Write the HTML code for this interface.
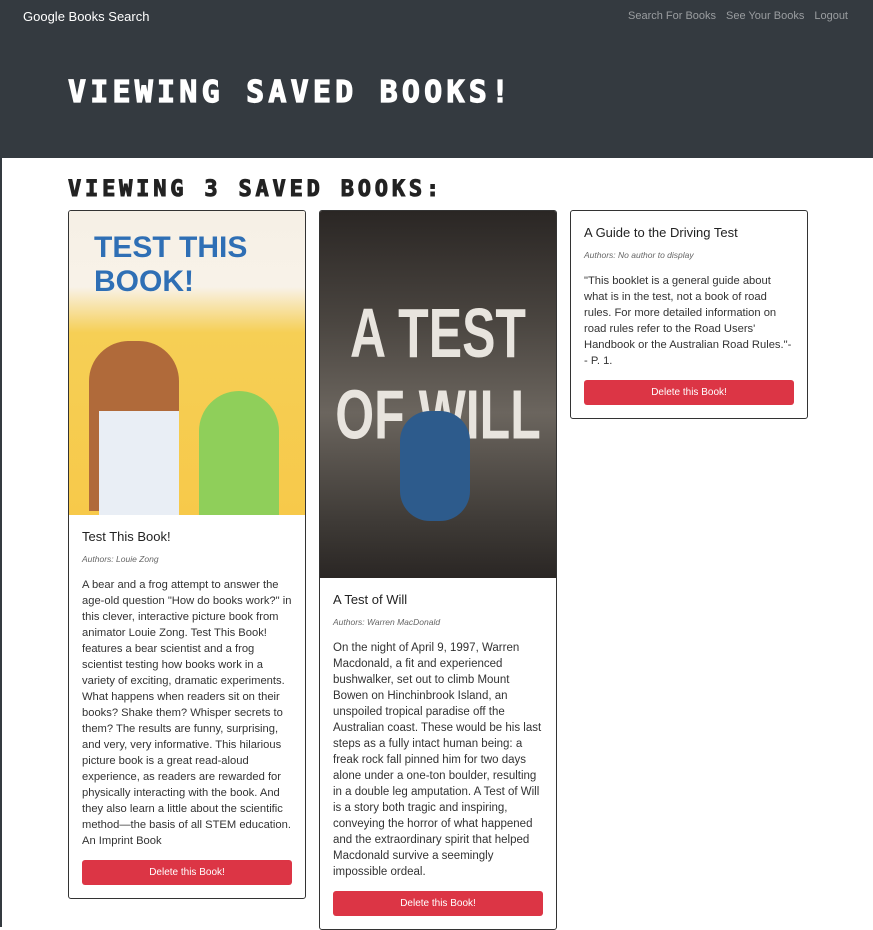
<!DOCTYPE html>
<html><head><style>
body{margin:0;width:873px;height:927px;overflow:hidden;font-family:"Liberation Sans",sans-serif;background:#fff;position:relative}
.lb{position:absolute;left:0;top:0;width:2px;height:927px;background:#343a40}
.hd{position:absolute;left:0;top:0;width:873px;height:158px;background:#343a40}
.brand{position:absolute;left:23px;top:9px;color:#fff;font-size:13px}
.nav{position:absolute;right:25px;top:10px;color:#9a9da0;font-size:11px}
.nav span{margin-left:10px}
h1{position:absolute;left:68px;top:75px;margin:0;color:#fff;font:bold 30px "DejaVu Sans Mono",monospace;letter-spacing:4.2px;-webkit-text-stroke:1.2px #fff}
h2{position:absolute;left:68px;top:177px;margin:0;color:#222;font:bold 22px "DejaVu Sans Mono",monospace;letter-spacing:3.8px;-webkit-text-stroke:1px #222}
.card{position:absolute;top:210px;width:236px;border:1px solid #333;border-radius:3px;background:#fff;overflow:hidden}
.img{width:236px}
.bd{padding:0 13px}
.t{font-size:13px;color:#222;margin:14px 0 10px}
.a{font-size:8.5px;font-style:italic;color:#666;margin-bottom:13px}
.p{font-size:11.2px;line-height:16px;color:#333}
.btn{background:#dc3545;color:#fff;font-size:10px;text-align:center;height:25px;line-height:25px;border-radius:3px;margin:11px 0 13px}
</style></head><body>
<div class="hd"></div><div class="lb"></div>
<div class="brand">Google Books Search</div>
<div class="nav"><span>Search For Books</span><span>See Your Books</span><span>Logout</span></div>
<h1>VIEWING SAVED BOOKS!</h1>
<h2>VIEWING 3 SAVED BOOKS:</h2>
<div class="card" style="left:68px">
<div class="img" style="height:304px;background:linear-gradient(180deg,#f6f0e6 0%,#f8f2e8 25%,#f6cf55 40%,#f7c94a 100%);position:relative">
<div style="position:absolute;left:25px;top:20px;font:bold 30px 'Liberation Sans';color:#2f6fb5">TEST THIS<br>BOOK!</div>
<div style="position:absolute;left:20px;top:130px;width:90px;height:170px;background:#b06a3a;border-radius:40px 40px 0 0"></div>
<div style="position:absolute;left:30px;top:200px;width:80px;height:104px;background:#e9eef5"></div>
<div style="position:absolute;left:130px;top:180px;width:80px;height:124px;background:#8fcf5a;border-radius:40px 40px 0 0"></div>
</div>
<div class="bd"><div class="t">Test This Book!</div><div class="a">Authors: Louie Zong</div>
<div class="p">A bear and a frog attempt to answer the age-old question "How do books work?" in this clever, interactive picture book from animator Louie Zong. Test This Book! features a bear scientist and a frog scientist testing how books work in a variety of exciting, dramatic experiments. What happens when readers sit on their books? Shake them? Whisper secrets to them? The results are funny, surprising, and very, very informative. This hilarious picture book is a great read-aloud experience, as readers are rewarded for physically interacting with the book. And they also learn a little about the scientific method—the basis of all STEM education. An Imprint Book</div>
<div class="btn">Delete this Book!</div></div></div>
<div class="card" style="left:319px">
<div class="img" style="height:367px;background:linear-gradient(180deg,#2a2624 0%,#4a4540 30%,#6b655e 55%,#3e3a36 85%,#2a2624 100%);position:relative">
<div style="position:absolute;left:0;width:236px;top:105px;text-align:center;font:bold 50px 'Liberation Sans Narrow','Liberation Sans';color:#e8e4de;transform:scaleY(1.4)">A TEST OF WILL</div>
<div style="position:absolute;left:80px;top:200px;width:70px;height:110px;background:#2d5b8c;border-radius:30px"></div>
</div>
<div class="bd"><div class="t">A Test of Will</div><div class="a">Authors: Warren MacDonald</div>
<div class="p" style="font-size:11.5px">On the night of April 9, 1997, Warren Macdonald, a fit and experienced bushwalker, set out to climb Mount Bowen on Hinchinbrook Island, an unspoiled tropical paradise off the Australian coast. These would be his last steps as a fully intact human being: a freak rock fall pinned him for two days alone under a one-ton boulder, resulting in a double leg amputation. A Test of Will is a story both tragic and inspiring, conveying the horror of what happened and the extraordinary spirit that helped Macdonald survive a seemingly impossible ordeal.</div>
<div class="btn">Delete this Book!</div></div></div>
<div class="card" style="left:570px">
<div class="bd"><div class="t">A Guide to the Driving Test</div><div class="a">Authors: No author to display</div>
<div class="p">"This booklet is a general guide about what is in the test, not a book of road rules. For more detailed information on road rules refer to the Road Users' Handbook or the Australian Road&nbsp;Rules."--&nbsp;P.&nbsp;1.</div>
<div class="btn">Delete this Book!</div></div></div>
</body></html>
